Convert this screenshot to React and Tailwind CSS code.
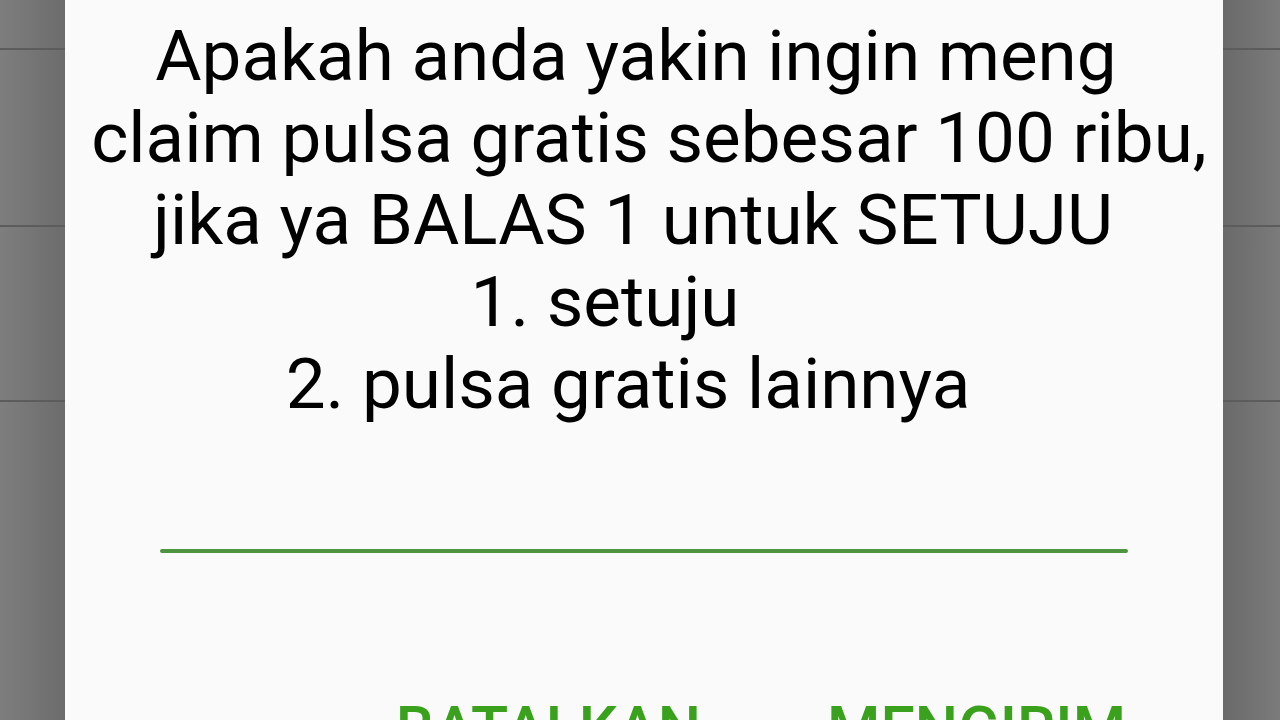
const lines = [
    { text: 'Apakah anda yakin ingin meng', cls: 'pr-[16px]' },
    { text: 'claim pulsa gratis sebesar 100 ribu,', cls: 'pl-[10px]' },
    { text: 'jika ya BALAS 1 untuk SETUJU', cls: 'pr-[22px]' },
    { text: '1. setuju', cls: 'pr-[78px]' },
    { text: '2. pulsa gratis lainnya', cls: 'pr-[32px]' },
];

function SidePanel({ side }) {
    const grad = side === 'left'
        ? 'bg-gradient-to-r from-[#7e7e7e] to-[#6c6c6c]'
        : 'bg-gradient-to-r from-[#6a6a6a] to-[#7b7b7b]';
    return (
        <div className={`flex flex-col h-full shrink-0 ${grad} ${side === 'left' ? 'w-[65px]' : 'w-[57px]'}`}>
            <div className="h-[50px] shrink-0 border-b-2 border-[#5c5c5c]" />
            <div className="h-[177px] shrink-0 border-b-2 border-[#5c5c5c]" />
            <div className="h-[175px] shrink-0 border-b-2 border-[#5c5c5c]" />
            <div className="flex-1" />
        </div>
    );
}

export default function App() {
    return (
        <div className="w-[1280px] h-[720px] overflow-hidden flex" style={{ fontFamily: 'Roboto, "Noto Sans", sans-serif' }}>
            <SidePanel side="left" />
            <div className="flex-1 bg-[#fafafa] flex flex-col overflow-hidden">
                <div className="shrink-0 pt-[15px] text-[71px] leading-[82px] text-black text-center">
                    {lines.map((l) => (
                        <div key={l.text} className={`whitespace-nowrap ${l.cls}`}>{l.text}</div>
                    ))}
                </div>
                <div className="shrink-0 mt-[124px] mx-[95px] h-[4px] bg-[#4f9440] rounded-full" />
                <div className="shrink-0 mt-[146px] flex justify-end gap-[126px] pr-[97px] text-[61px] leading-[61px] font-medium text-[#3aa11c]">
                    <span>BATALKAN</span>
                    <span>MENGIRIM</span>
                </div>
            </div>
            <SidePanel side="right" />
        </div>
    );
}
